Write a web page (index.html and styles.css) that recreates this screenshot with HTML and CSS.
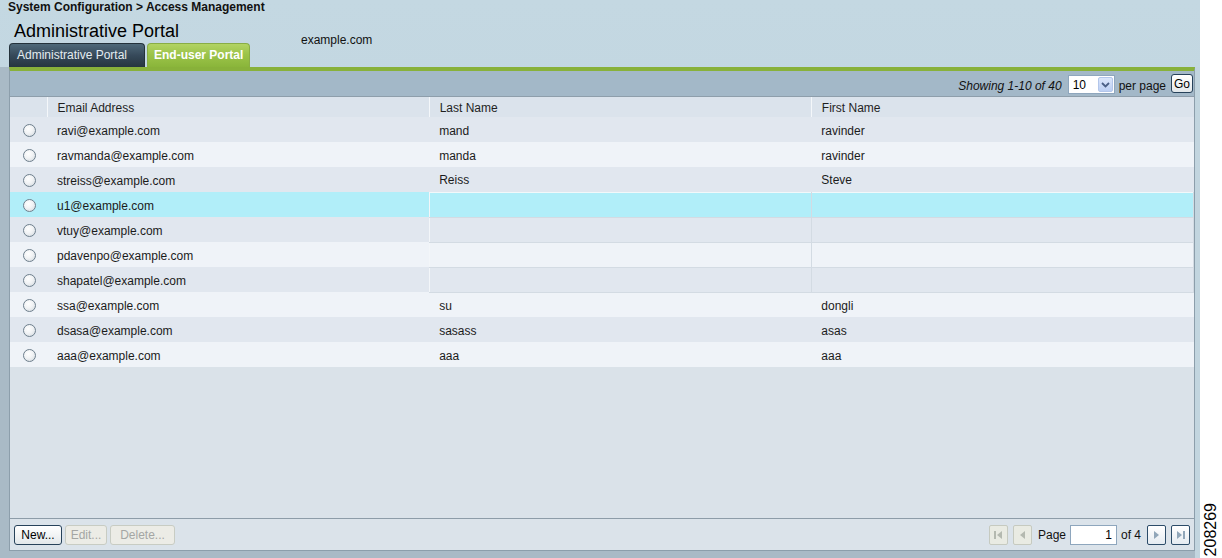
FILE: index.html
```html
<!DOCTYPE html>
<html>
<head>
<meta charset="utf-8">
<title>Access Management</title>
<link rel="stylesheet" href="styles.css">
</head>
<body>
<div class="screen">
  <div class="page">
    <div class="crumb">System Configuration &gt; Access Management</div>
    <div class="head">
      <div class="head-left">
        <h1 class="title">Administrative Portal</h1>
        <div class="tabs">
          <div class="tab tab-admin">Administrative Portal</div>
          <div class="tab tab-user">End-user Portal</div>
        </div>
      </div>
      <div class="domain">example.com</div>
    </div>
    <div class="frame">
      <div class="panel">
        <div class="toolbar">
          <span class="showing">Showing 1-10 of 40</span>
          <span class="select"><span class="select-val">10</span><span class="select-btn"><svg width="9" height="6" viewBox="0 0 9 6"><path d="M1 1 L4.5 4.5 L8 1" fill="none" stroke="#4a5f86" stroke-width="1.8"/></svg></span></span>
          <span class="perpage">per page</span>
          <span class="btn go">Go</span>
        </div>
        <table class="grid">
          <colgroup><col class="c-radio"><col class="c-col"><col class="c-col"><col class="c-col"></colgroup>
          <thead>
            <tr><th></th><th>Email Address</th><th>Last Name</th><th>First Name</th></tr>
          </thead>
          <tbody>
            <tr><td class="rc"><span class="radio"></span></td><td>ravi@example.com</td><td>mand</td><td>ravinder</td></tr>
            <tr><td class="rc"><span class="radio"></span></td><td>ravmanda@example.com</td><td>manda</td><td>ravinder</td></tr>
            <tr><td class="rc"><span class="radio"></span></td><td>streiss@example.com</td><td>Reiss</td><td>Steve</td></tr>
            <tr class="sel"><td class="rc"><span class="radio"></span></td><td>u1@example.com</td><td class="empty"></td><td class="empty"></td></tr>
            <tr><td class="rc"><span class="radio"></span></td><td>vtuy@example.com</td><td class="empty"></td><td class="empty"></td></tr>
            <tr><td class="rc"><span class="radio"></span></td><td>pdavenpo@example.com</td><td class="empty"></td><td class="empty"></td></tr>
            <tr><td class="rc"><span class="radio"></span></td><td>shapatel@example.com</td><td class="empty"></td><td class="empty"></td></tr>
            <tr><td class="rc"><span class="radio"></span></td><td>ssa@example.com</td><td>su</td><td>dongli</td></tr>
            <tr><td class="rc"><span class="radio"></span></td><td>dsasa@example.com</td><td>sasass</td><td>asas</td></tr>
            <tr><td class="rc"><span class="radio"></span></td><td>aaa@example.com</td><td>aaa</td><td>aaa</td></tr>
          </tbody>
        </table>
        <div class="filler"></div>
        <div class="footer">
          <div class="actions">
            <span class="btn b-new">New...</span>
            <span class="btn dis b-edit">Edit...</span>
            <span class="btn dis b-del">Delete...</span>
          </div>
          <div class="pager">
            <span class="pbtn dis"><svg width="11" height="10" viewBox="0 0 11 10"><rect x="1" y="1" width="2" height="8" fill="#b4b9b0"/><path d="M9 1 L4 5 L9 9 Z" fill="#b4b9b0"/></svg></span>
            <span class="pbtn dis"><svg width="11" height="10" viewBox="0 0 11 10"><path d="M8 1 L3 5 L8 9 Z" fill="#b4b9b0"/></svg></span>
            <span class="plabel">Page</span>
            <span class="pinput">1</span>
            <span class="plabel of">of 4</span>
            <span class="pbtn on"><svg width="11" height="10" viewBox="0 0 11 10"><path d="M3 1 L8 5 L3 9 Z" fill="#90a6b9"/></svg></span>
            <span class="pbtn on"><svg width="11" height="10" viewBox="0 0 11 10"><path d="M2 1 L7 5 L2 9 Z" fill="#90a6b9"/><rect x="8" y="1" width="2" height="8" fill="#90a6b9"/></svg></span>
          </div>
        </div>
      </div>
    </div>
  </div>
  <div class="side"><span class="stamp">208269</span></div>
</div>
</body>
</html>
```
FILE: styles.css
```css
* { box-sizing: border-box; }
html, body { margin: 0; padding: 0; }
body {
  width: 1222px;
  height: 558px;
  overflow: hidden;
  background: #ffffff;
  font-family: "Liberation Sans", Arial, sans-serif;
  font-size: 12px;
  color: #1a1a1a;
}
.screen { display: flex; width: 1222px; height: 558px; }
.page {
  width: 1200px;
  height: 558px;
  display: flex;
  flex-direction: column;
  background: linear-gradient(to bottom, #c4d8e2 0%, #bcd1dc 100%);
}
.crumb {
  height: 14px;
  line-height: 15px;
  padding-left: 8px;
  font-weight: bold;
  font-size: 12px;
  color: #111;
}
.head { display: flex; margin-top: 5px; }
.head-left { margin-left: 9px; width: 241px; }
.title {
  margin: 0 0 2px 0;
  padding-left: 5px;
  padding-top: 2px;
  font-size: 18px;
  line-height: 20px;
  font-weight: normal;
  color: #000;
}
.tabs { display: flex; gap: 2px; height: 24px; }
.tab {
  height: 24px;
  line-height: 23px;
  border-radius: 4px 4px 0 0;
  font-size: 12px;
  white-space: nowrap;
}
.tab-admin {
  width: 136px;
  padding-left: 7px;
  color: #e4ecf0;
  background: linear-gradient(to bottom, #4f6979 0%, #36495a 50%, #26363f 100%);
  border: 1px solid #24323b;
  border-bottom: none;
}
.tab-user {
  width: 103px;
  padding-left: 6px;
  color: #ffffff;
  font-weight: bold;
  background: linear-gradient(to bottom, #b2d364 0%, #9cc44a 45%, #8ab53a 100%);
  border: 1px solid #89ad45;
  border-bottom: none;
}
.domain {
  margin-left: 51px;
  margin-top: 14px;
  line-height: 14px;
  font-size: 12px;
  color: #111;
}
.frame {
  flex: 1;
  padding: 0 0 7px 9px;
  background: linear-gradient(to right, #a9bac6 1195px, #c2d5df 1195px);
  display: flex;
}
.panel {
  width: 1186px;
  display: flex;
  flex-direction: column;
  border-top: 4px solid #88b13a;
  border-left: 1px solid #8c9eab;
  border-right: 1px solid #8c9eab;
  border-bottom: 1px solid #8c9eab;
  background: #dae2e9;
}
.toolbar {
  height: 26px;
  border-bottom: 1px solid #8e9eab;
  background: #a3b8c8;
  display: flex;
  align-items: center;
  justify-content: flex-end;
  padding-right: 1px;
  padding-top: 2px;
  font-size: 12px;
  color: #111;
}
.showing { font-style: italic; margin-right: 6px; margin-top: 3px; }
.select {
  width: 47px;
  height: 19px;
  background: #fff;
  border: 1px solid #8ea6bd;
  display: flex;
  align-items: center;
  justify-content: space-between;
  padding: 0 1px 0 4px;
  margin-right: 4px;
}
.select-val { font-size: 12px; color: #000; }
.select-btn {
  width: 15px;
  height: 15px;
  border-radius: 2px;
  background: linear-gradient(to bottom, #dbe6fb 0%, #bccff3 100%);
  border: 1px solid #b3c6ea;
  display: flex;
  align-items: center;
  justify-content: center;
}
.perpage { margin-right: 5px; margin-top: 3px; }
.btn {
  display: inline-flex;
  align-items: center;
  justify-content: center;
  height: 20px;
  border-radius: 3px;
  border: 1px solid #27425a;
  background: linear-gradient(to bottom, #ffffff 0%, #f2f4f5 50%, #e2e7ea 100%);
  color: #000;
  font-size: 12px;
}
.go { width: 22px; height: 19px; margin-bottom: 2px; }
.grid {
  width: 1184px;
  border-collapse: collapse;
  table-layout: fixed;
}
.c-radio { width: 37px; }
.c-col { width: 382px; }
.grid th {
  height: 20px;
  padding: 2px 0 0 10px;
  background: #dbe3ec;
  font-weight: normal;
  text-align: left;
  font-size: 12px;
  color: #1f1f1f;
  border-left: 1px solid #f4f7fa;
}
.grid th:first-child { border-left: none; }
.grid td {
  height: 25px;
  padding: 2px 0 0 10px;
  font-size: 12px;
  color: #1b1b1b;
  white-space: nowrap;
}
.grid tbody tr:nth-child(odd) { background: #e1e7ef; }
.grid tbody tr:nth-child(even) { background: #eff3f8; }
.grid tbody tr.sel { background: #b1eef9; }
.grid td.empty {
  border: 1px solid #d3dbe3;
  border-left-color: #f3f6f9;
}
.grid tr.sel td.empty { border-top-color: #f2f8fa; }
.grid td.rc { padding: 0; text-align: center; }
.radio {
  display: inline-block;
  width: 13px;
  height: 13px;
  border-radius: 50%;
  border: 1px solid #6e7f8d;
  background: radial-gradient(circle at 40% 35%, #ffffff 0%, #f1f3f5 45%, #cfd6dc 100%);
  vertical-align: middle;
  margin-left: 2px;
}
.filler { flex: 1; background: #dae2e9; }
.footer {
  height: 32px;
  border-top: 1px solid #8d9ca8;
  background: #dbe3ea;
  display: flex;
  align-items: center;
  justify-content: space-between;
  padding: 1px 4px 0 4px;
}
.actions { display: flex; gap: 3px; }
.b-new { width: 48px; }
.b-edit { width: 42px; }
.b-del { width: 65px; }
.btn.dis {
  border-color: #c8ccc3;
  background: #ececE6;
  color: #a4a6a4;
}
.pager { display: flex; align-items: center; }
.pbtn {
  width: 19px;
  height: 20px;
  border-radius: 2px;
  display: inline-flex;
  align-items: center;
  justify-content: center;
}
.pbtn.dis { border: 1px solid #c6cac0; background: #e9ebe3; }
.pbtn.on {
  border: 1px solid #2c4c69;
  background: linear-gradient(to bottom, #ffffff 0%, #e4ebf1 100%);
}
.pager .pbtn + .pbtn { margin-left: 5px; }
.plabel { margin-left: 6px; font-size: 12px; color: #111; }
.pinput {
  margin-left: 4px;
  width: 47px;
  height: 20px;
  background: #fff;
  border: 1px solid #8ea6bd;
  text-align: right;
  padding-right: 4px;
  line-height: 18px;
  font-size: 12px;
  color: #000;
}
.plabel.of { margin-left: 4px; margin-right: 6px; }
.side {
  width: 22px;
  display: flex;
  flex-direction: column;
  justify-content: flex-end;
  align-items: center;
  padding-bottom: 2px;
}
.stamp {
  writing-mode: vertical-rl;
  transform: rotate(180deg);
  font-size: 16px;
  line-height: 16px;
  color: #000;
  font-family: "Liberation Sans", Arial, sans-serif;
}
```
